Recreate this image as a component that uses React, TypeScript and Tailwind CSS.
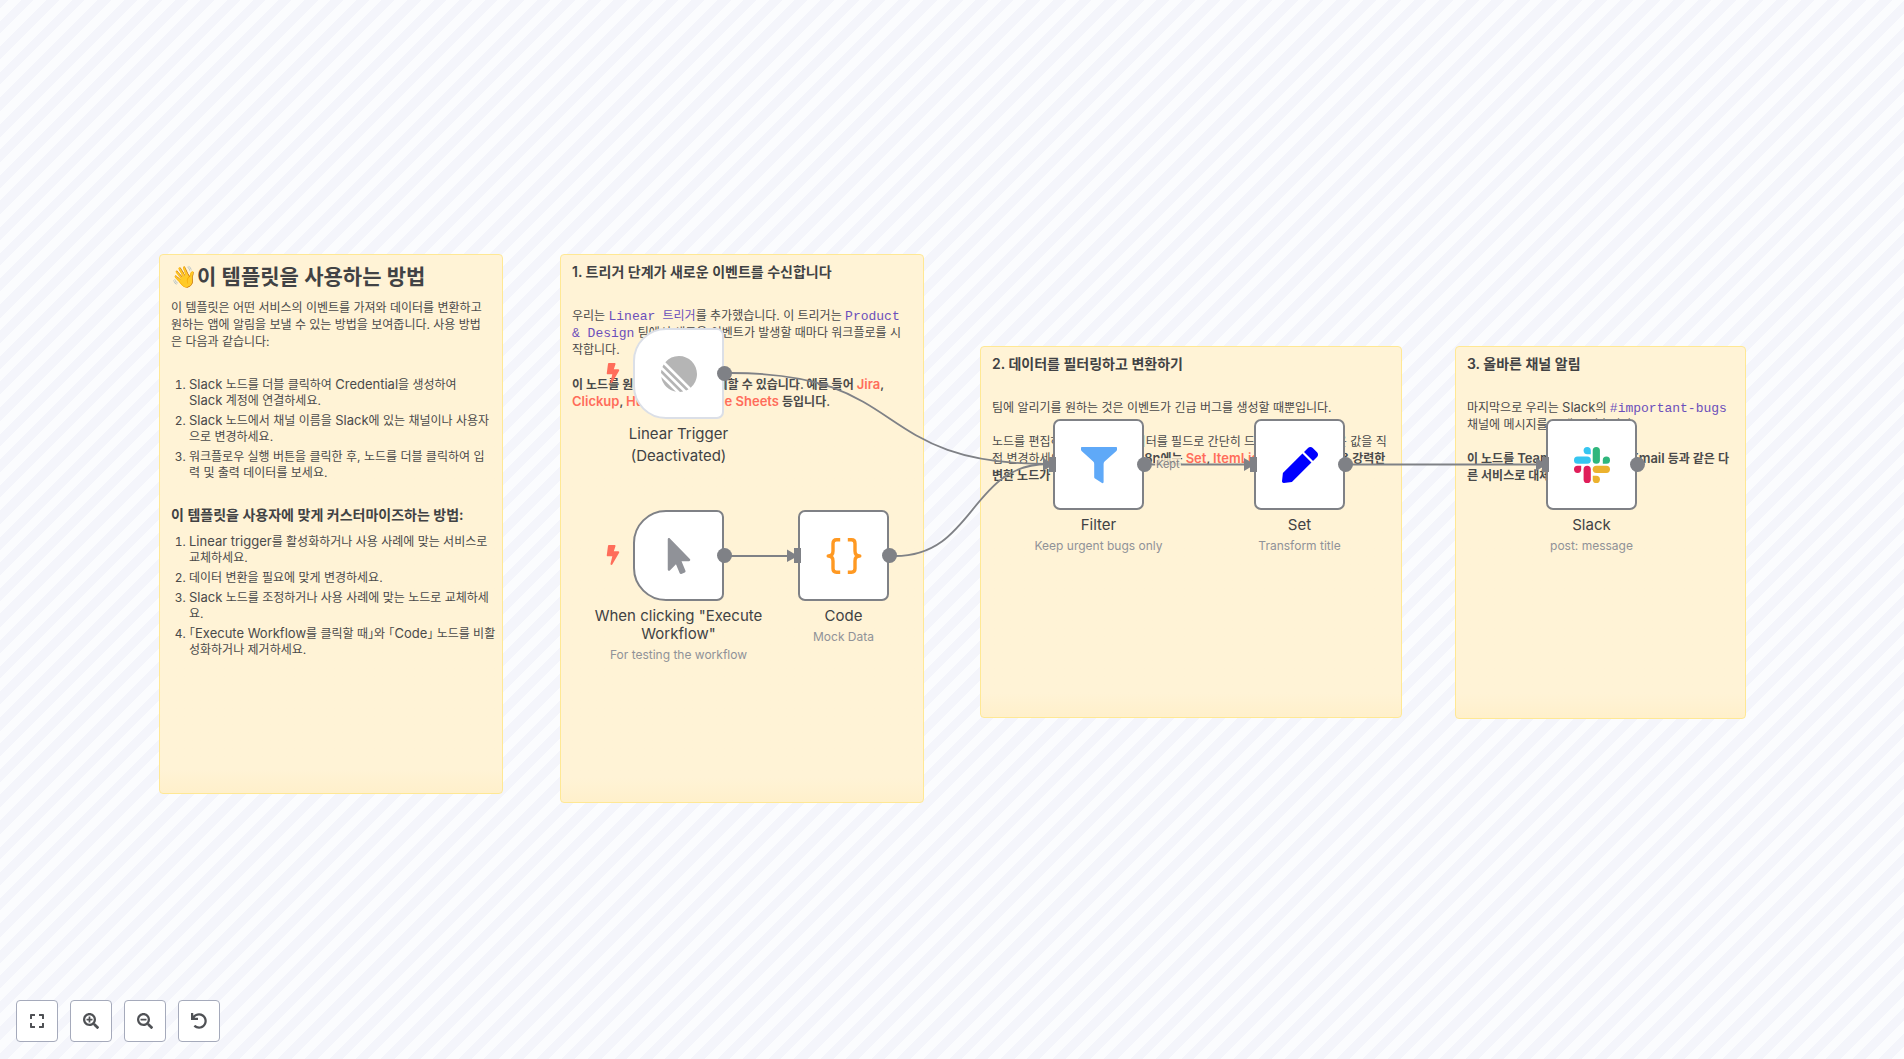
import type { ReactNode } from "react";
import { FaBolt, FaExpand, FaMousePointer, FaPen, FaSearchMinus, FaSearchPlus, FaUndo } from "react-icons/fa";
import { SiLinear } from "react-icons/si";

function Sticky({ place, children }: { place: string; children: ReactNode }) {
  return (
    <section
      className={`absolute overflow-hidden rounded border border-[#ffe894] bg-linear-to-b from-[#fff3d6] from-[calc(100%-24px)] to-[#fff0cb] px-[11px] pt-2 text-xs leading-[17px] text-[#4a4a4a] ${place}`}
    >
      {children}
    </section>
  );
}

function Heading({ children }: { children: ReactNode }) {
  return <h2 className="text-sm leading-[18px] font-semibold text-[#414244]">{children}</h2>;
}

function Steps({ children }: { children: ReactNode }) {
  return (
    <ol className="-mr-1 list-decimal space-y-1 pl-[18px] leading-4 [font-feature-settings:'halt']">{children}</ol>
  );
}

function Latin({ children }: { children: ReactNode }) {
  return <span className="text-[13px] leading-none">{children}</span>;
}

function Code({ children }: { children: ReactNode }) {
  return (
    <code className="font-['Liberation_Mono','Noto_Sans_CJK_KR',monospace] leading-none text-[#6b4fbb]">{children}</code>
  );
}

function Link({ children }: { children: ReactNode }) {
  return (
    <a href="#" className="text-[13px] leading-none text-[#ff6d5a]">
      {children}
    </a>
  );
}

type NodeProps = {
  place: string;
  title: ReactNode;
  subtitle?: string;
  trigger?: boolean;
  disabled?: boolean;
  children: ReactNode;
};

function FlowNode({ place, title, subtitle, trigger, disabled, children }: NodeProps) {
  return (
    <figure className={`absolute w-[91px] ${place}`}>
      <div
        className={`flex h-[91px] items-center justify-center border-2 bg-white ${
          trigger ? "rounded-l-[33px] rounded-r-[7px]" : "rounded-[7px]"
        } ${disabled ? "border-[#dbdfe7]" : "border-[#7f8186]"}`}
      >
        {children}
      </div>
      {trigger && <FaBolt className="absolute top-[35px] -left-[29px] h-[20px] w-[18px] text-[#ff6d5a]" />}
      {!trigger && <span className="absolute top-[38px] -left-[4px] h-[15px] w-[7px] bg-[#7f8186]" />}
      <span className="absolute top-[38px] -right-[8px] size-[15px] rounded-full bg-[#7f8186]" />
      <figcaption className="-mx-10 mt-[6px] text-center">
        <div className="text-[15px] leading-[18px] text-[#414244]">{title}</div>
        {subtitle && <div className="mt-[3px] text-xs leading-[18px] text-[#909298]">{subtitle}</div>}
      </figcaption>
    </figure>
  );
}

function BracesIcon() {
  return (
    <svg viewBox="0 0 36 36" className="size-9" fill="none" stroke="#ff9922" strokeWidth="3.4" strokeLinejoin="round" strokeLinecap="square">
      <path d="M12.500 1.800H10.500Q7 1.800 7 5.500V13Q7 18 2.200 18Q7 18 7 23V30.500Q7 34.200 10.500 34.200H12.500" />
      <path d="M23.500 1.800H25.500Q29 1.800 29 5.500V13Q29 18 33.800 18Q29 18 29 23V30.500Q29 34.200 25.500 34.200H23.500" />
    </svg>
  );
}

function FunnelIcon() {
  return (
    <svg viewBox="0 0 36 36" className="size-9 overflow-visible" fill="#5fa9f8">
      <path d="M.8 0H35.200Q36 0 36 .8V2.500Q36 3.300 35.400 3.900L23.600 14.600Q22.600 15.600 22.600 17V35Q22.600 36.600 21 36L14 31.600Q13.200 31 13.200 30V17Q13.200 15.600 12.200 14.600L.6 3.900Q0 3.300 0 2.500V.8Q0 0 .8 0Z" />
    </svg>
  );
}

function SlackIcon() {
  return (
    <svg viewBox="0 0 150 150" className="size-9">
      <g fill="#2fb67c">
        <rect x="78" y="0" width="30" height="70" rx="15" />
        <path d="M120 70V55a15 15 0 1 1 15 15Z" />
      </g>
      <g fill="#36c5f0">
        <rect x="0" y="40" width="70" height="30" rx="15" />
        <path d="M70 30H55a15 15 0 1 1 15-15Z" />
      </g>
      <g fill="#e01e5a">
        <rect x="40" y="78" width="30" height="72" rx="15" />
        <path d="M30 78V93a15 15 0 1 1-15-15Z" />
      </g>
      <g fill="#ecb22e">
        <rect x="78" y="78" width="72" height="30" rx="15" />
        <path d="M78 120H93a15 15 0 1 1-15 15Z" />
      </g>
    </svg>
  );
}

function Connections() {
  return (
    <svg className="pointer-events-none absolute top-0 left-0 size-full" fill="none" stroke="#7f8186" strokeWidth="1.8">
      <path d="M731 373C912 373 867 464 1048 464" />
      <path d="M895 556C975 556 970 464 1048 464" />
      <path d="M731 556H790" />
      <path d="M1152 464.500H1248" />
      <path d="M1352 464.500H1540" />
      <g fill="#7f8186" stroke="none">
        <path d="M787 549.500L798 556L787 562Z" />
        <path d="M1043 458L1054 464.500L1043 471Z" />
        <path d="M1244 458L1255 464.500L1244 471Z" />
        <path d="M1536 458L1547 464.500L1536 471Z" />
      </g>
    </svg>
  );
}

const controls = [
  { label: "Fit to view", Icon: FaExpand },
  { label: "Zoom in", Icon: FaSearchPlus },
  { label: "Zoom out", Icon: FaSearchMinus },
  { label: "Reset zoom", Icon: FaUndo },
];

export default function App() {
  return (
    <main className="relative flex h-screen w-full flex-col justify-end overflow-hidden bg-[repeating-linear-gradient(135deg,#f4f5fb_0px,#f4f5fb_6px,#fbfcfe_6px,#fbfcfe_15px,#f4f5fb_15px,#f4f5fb_24px,#fbfcfe_24px,#fbfcfe_33px,#f4f5fb_33px,#f4f5fb_42px,#fbfcfe_42px,#fbfcfe_51px,#f4f5fb_51px,#f4f5fb_60px,#fbfcfe_60px,#fbfcfe_69px,#f4f5fb_69px,#f4f5fb_73px)] font-[Inter,'Noto_Sans_CJK_KR',sans-serif]">
      <Sticky place="top-[254px] left-[159px] h-[540px] w-[344px]">
        <h1 className="flex items-center text-[21px] leading-7 font-semibold whitespace-nowrap text-[#414244]">
          <span>👋</span>이 템플릿을 사용하는 방법
        </h1>
        <p className="mt-2 mb-[27px]">
          이 템플릿은 어떤 서비스의 이벤트를 가져와 데이터를 변환하고 원하는 앱에 알림을 보낼 수 있는 방법을 보여줍니다. 사용 방법은 다음과 같습니다:
        </p>
        <Steps>
          <li>
            <Latin>Slack</Latin> 노드를 더블 클릭하여 <Latin>Credential</Latin>을 생성하여
            <br />
            <Latin>Slack</Latin> 계정에 연결하세요.
          </li>
          <li>
            <Latin>Slack</Latin> 노드에서 채널 이름을 <Latin>Slack</Latin>에 있는 채널이나 사용자으로 변경하세요.
          </li>
          <li>워크플로우 실행 버튼을 클릭한 후, 노드를 더블 클릭하여 입력 및 출력 데이터를 보세요.</li>
        </Steps>
        <div className="mt-[25px] mb-[10px]">
          <Heading>이 템플릿을 사용자에 맞게 커스터마이즈하는 방법:</Heading>
        </div>
        <Steps>
          <li>
            <Latin>Linear trigger</Latin>를 활성화하거나 사용 사례에 맞는 서비스로 교체하세요.
          </li>
          <li>데이터 변환을 필요에 맞게 변경하세요.</li>
          <li>
            <Latin>Slack</Latin> 노드를 조정하거나 사용 사례에 맞는 노드로 교체하세요.
          </li>
          <li className="whitespace-nowrap">
            「<Latin>Execute Workflow</Latin>를 클릭할 때」와 「<Latin>Code</Latin>」 노드를 비활
            <br />
            성화하거나 제거하세요.
          </li>
        </Steps>
      </Sticky>

      <Sticky place="top-[254px] left-[560px] h-[549px] w-[364px]">
        <Heading>1. 트리거 단계가 새로운 이벤트를 수신합니다</Heading>
        <p className="mt-[26px] whitespace-nowrap">
          우리는{" "}
          <Code>
            <Latin>Linear</Latin> 트리거
          </Code>
          를 추가했습니다. 이 트리거는{" "}
          <Code>
            <Latin>
              Product
              <br />
              &amp; Design
            </Latin>
          </Code>{" "}
          팀에서 새로운 이벤트가 발생할 때마다 워크플로를 시
          <br />
          작합니다.
        </p>
        <p className="mt-[18px] font-semibold">
          이 노드를 원하는 서비스로 대체할 수 있습니다. 예를 들어 <Link>Jira</Link>,{" "}
          <Link>Clickup</Link>, <Link>HubSpot</Link>, <Link>Google Sheets</Link> 등입니다.
        </p>
      </Sticky>

      <Sticky place="top-[346px] left-[980px] h-[372px] w-[422px]">
        <Heading>2. 데이터를 필터링하고 변환하기</Heading>
        <p className="mt-[26px]">팀에 알리기를 원하는 것은 이벤트가 긴급 버그를 생성할 때뿐입니다.</p>
        <p className="mt-[17px] whitespace-nowrap">
          노드를 편집하려면 왼쪽의 데이터를 필드로 간단히 드래그하거나 새로운 값을 직
          <br />
          접 변경하세요.{" "}
          <b className="font-semibold">
            이 외에 또한, <Latin>n8n</Latin>에는 <Link>Set</Link>, <Link>ItemLists</Link>, <Link>Code</Link> 등 많은 강력한
            <br />
            변환 노드가 있습니다.
          </b>
        </p>
      </Sticky>

      <Sticky place="top-[346px] left-[1455px] h-[373px] w-[291px]">
        <Heading>3. 올바른 채널 알림</Heading>
        <p className="mt-[26px]">
          마지막으로 우리는 <Latin>Slack</Latin>의{" "}
          <Code>
            <Latin>#important-bugs</Latin>
          </Code>
          <br />
          채널에 메시지를 보내고 있습니다.
        </p>
        <p className="mt-[17px] font-semibold">
          이 노드를 <Latin>Teams</Latin>, <Latin>Telegram</Latin>, <Latin>Email</Latin> 등과 같은 다<br />른 서비스로 대체하세요.
        </p>
      </Sticky>

      <Connections />

      <FlowNode
        place="top-[328px] left-[633px]"
        trigger
        disabled
        title={
          <>
            Linear Trigger
            <div className="mt-1">(Deactivated)</div>
          </>
        }
      >
        <SiLinear className="size-9 text-[#b5b5b5]" />
      </FlowNode>
      <FlowNode place="top-[510px] left-[633px]" trigger title={'When clicking "Execute Workflow"'} subtitle="For testing the workflow">
        <FaMousePointer className="size-9 text-[#909298]" />
      </FlowNode>
      <FlowNode place="top-[510px] left-[798px]" title="Code" subtitle="Mock Data">
        <BracesIcon />
      </FlowNode>
      <FlowNode place="top-[419px] left-[1053px]" title="Filter" subtitle="Keep urgent bugs only">
        <FunnelIcon />
      </FlowNode>
      <FlowNode place="top-[419px] left-[1254px]" title="Set" subtitle="Transform title">
        <FaPen className="size-9 text-[#0000ff]" />
      </FlowNode>
      <FlowNode place="top-[419px] left-[1546px]" title="Slack" subtitle="post: message">
        <SlackIcon />
      </FlowNode>
      <span className="absolute top-[458px] left-[1155px] bg-[#fff3d6]/80 px-px text-[11px] leading-3 text-[#7f8186]">Kept</span>

      <nav aria-label="Canvas controls" className="relative mb-[17px] ml-4 flex gap-3">
        {controls.map(({ label, Icon }) => (
          <button
            key={label}
            type="button"
            aria-label={label}
            className="flex size-[42px] items-center justify-center rounded border border-[#a5aabb] bg-white text-[#4f5155]"
          >
            <Icon className="size-4" />
          </button>
        ))}
      </nav>
    </main>
  );
}
